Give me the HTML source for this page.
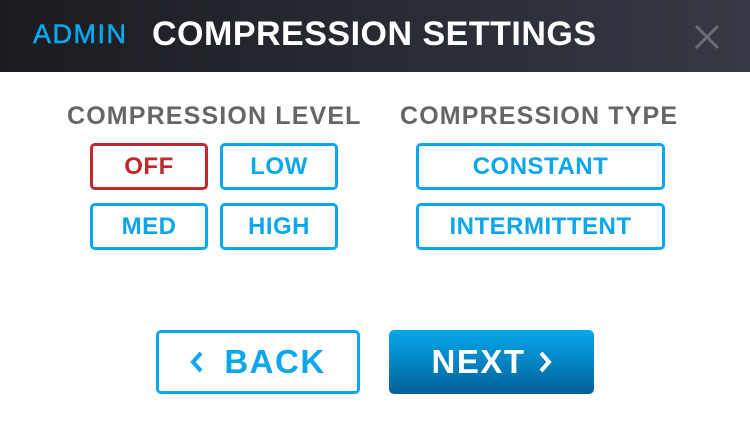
<!DOCTYPE html>
<html><head><style>
*{margin:0;padding:0;box-sizing:border-box}
body{width:750px;height:426px;background:#fff;position:relative;overflow:hidden;font-family:"Liberation Sans",sans-serif;font-weight:bold}
.hd{position:absolute;left:0;top:0;width:750px;height:72px;background:linear-gradient(90deg,#1b1c21,#2a2d36 60%,#363a44)}
.hd .a{position:absolute;left:33px;top:19px;font-size:27px;color:#0aa6ee;font-weight:normal;-webkit-text-stroke:0.6px #0aa6ee;letter-spacing:1.5px}
.hd .t{position:absolute;left:152px;top:15px;font-size:34px;color:#fff;letter-spacing:0.5px}
.x{position:absolute;left:694px;top:24px}
.lb{position:absolute;top:102px;font-size:25px;color:#666;white-space:nowrap;letter-spacing:1.15px}
.b{position:absolute;border:3px solid #0aa6ee;border-radius:5px;color:#0aa6ee;font-size:24px;display:flex;align-items:center;justify-content:center;letter-spacing:0.5px;height:47px}
.off{border-color:#c1272d;color:#c1272d}
.big{height:64px;font-size:33px;letter-spacing:1.5px}
.nx{background:linear-gradient(#05a8ec,#03609a);border:none;color:#fff}
</style></head><body>
<div class="hd"><div class="a">ADMIN</div><div class="t">COMPRESSION SETTINGS</div>
<svg class="x" width="26" height="26" viewBox="0 0 26 26"><path d="M2 2L24 24M24 2L2 24" stroke="#6a6d74" stroke-width="3"/></svg></div>
<div class="lb" style="left:67px">COMPRESSION LEVEL</div>
<div class="lb" style="left:400px">COMPRESSION TYPE</div>
<div class="b off" style="left:90px;top:143px;width:118px">OFF</div>
<div class="b" style="left:220px;top:143px;width:118px">LOW</div>
<div class="b" style="left:90px;top:203px;width:118px">MED</div>
<div class="b" style="left:220px;top:203px;width:118px">HIGH</div>
<div class="b" style="left:416px;top:143px;width:249px">CONSTANT</div>
<div class="b" style="left:416px;top:203px;width:249px">INTERMITTENT</div>
<div class="b big" style="left:156px;top:330px;width:204px"><svg width="14" height="24" viewBox="0 0 14 24" style="margin-right:20px"><path d="M11 3L3 12L11 21" fill="none" stroke="#0aa6ee" stroke-width="4"/></svg>BACK</div>
<div class="b big nx" style="left:389px;top:330px;width:205px">NEXT<svg width="14" height="24" viewBox="0 0 14 24" style="margin-left:12px"><path d="M3 3L11 12L3 21" fill="none" stroke="#fff" stroke-width="4"/></svg></div>
</body></html>
